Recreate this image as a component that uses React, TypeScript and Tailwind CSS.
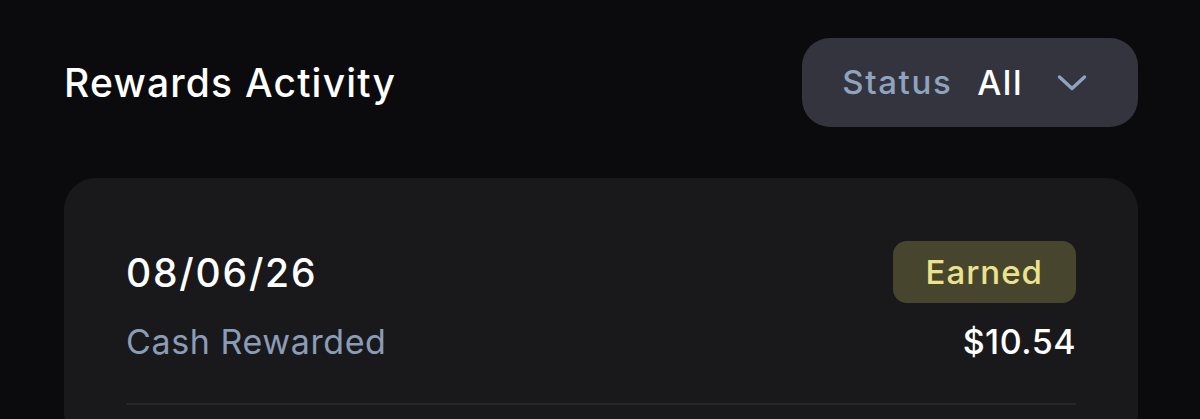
import React from 'react';

const FONT = { fontFamily: 'Inter, "Liberation Sans", sans-serif' };

function Chevron() {
  return (
    <svg width="30" height="18" viewBox="0 0 30 18" fill="none" className="shrink-0">
      <polyline points="2.5,3 15,14.5 27.5,3" stroke="#8fa3bf" strokeWidth="3.4" strokeLinecap="round" strokeLinejoin="round" />
    </svg>
  );
}

interface Entry {
  date: string;
  label: string;
  status: string;
  amount: string;
}

const ENTRIES: Entry[] = [
  { date: '08/06/26', label: 'Cash Rewarded', status: 'Earned', amount: '$10.54' },
];

export default function App() {
  return (
    <div className="h-screen overflow-hidden bg-[#0b0b0d] text-white" style={FONT}>
      <div className="pl-[64px] pr-[62px] pt-[38px]">
        {/* Header */}
        <div className="flex items-center justify-between">
          <h1 className="text-[39px] font-medium leading-none tracking-[1.2px]">Rewards Activity</h1>
          <button className="flex h-[89px] items-center rounded-[28px] bg-[#34343e] pl-[40px] pr-[51px]">
            <span className="text-[33px] font-medium leading-none tracking-[1.6px] text-[#8fa3bf]">Status</span>
            <span className="ml-[25px] text-[34px] font-medium leading-none tracking-[1.5px] text-white">All</span>
            <span className="ml-[34px]"><Chevron /></span>
          </button>
        </div>

        {/* Activity card */}
        <div className="mt-[51px] rounded-[32px] bg-[#19191c] px-[62px] pt-[63px] pb-[40px]">
          {ENTRIES.map((e, i) => (
            <div key={i}>
              <div className="flex items-center justify-between">
                <span className="text-[39px] font-medium leading-none tracking-[1.8px]">{e.date}</span>
                <span className="flex h-[62px] items-center rounded-[14px] bg-[#48452f] px-[33px] text-[33px] font-medium leading-none tracking-[1px] text-[#ebe38c]">
                  {e.status}
                </span>
              </div>
              <div className="mt-[22px] flex items-center justify-between">
                <span className="text-[34px] leading-none tracking-[0.6px] text-[#8a9cb6]">{e.label}</span>
                <span className="text-[34px] font-medium leading-none tracking-[0.5px]">{e.amount}</span>
              </div>
              <div className="mt-[44px] h-[2px] bg-[#26262c]" />
            </div>
          ))}
        </div>
      </div>
    </div>
  );
}
